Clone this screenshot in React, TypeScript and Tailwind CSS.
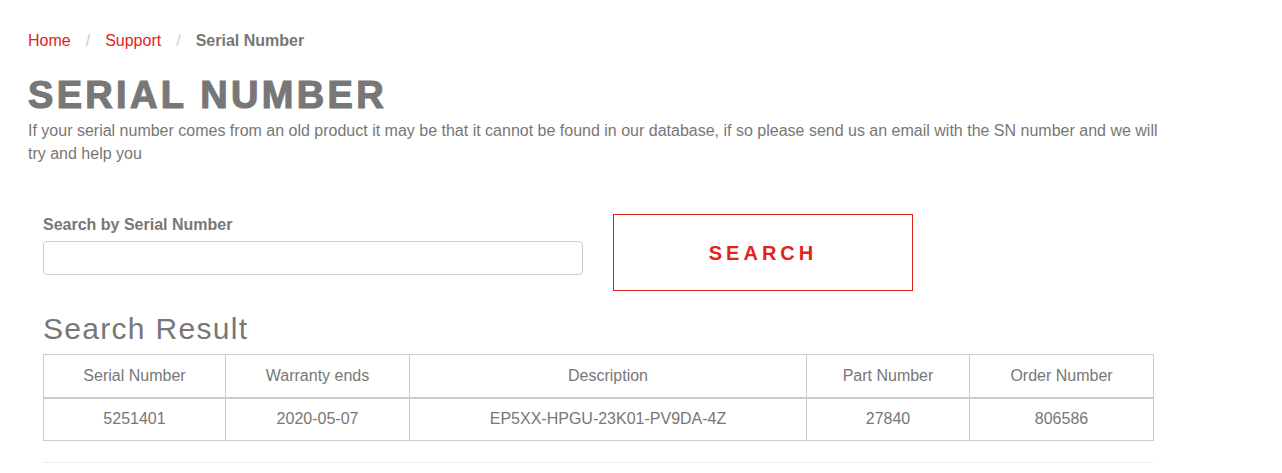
import React, { useState } from 'react';

const rows = [
  { serial: '5251401', warranty: '2020-05-07', description: 'EP5XX-HPGU-23K01-PV9DA-4Z', part: '27840', order: '806586' },
];

export default function App() {
  const [serial, setSerial] = useState('');

  return (
    <div className="min-h-screen bg-white font-['Liberation_Sans',Arial,sans-serif] text-[#777]">
      <div className="w-[1165px] pl-[28px] pt-[32px]">
        {/* Breadcrumb */}
        <nav className="flex items-center text-[16px] leading-[18px]">
          <a href="#" className="text-[#e2231a]">Home</a>
          <span className="px-[15px] text-[#ccc]">/</span>
          <a href="#" className="text-[#e2231a]">Support</a>
          <span className="px-[15px] text-[#ccc]">/</span>
          <span className="font-bold text-[#777]">Serial Number</span>
        </nav>

        <h1 className="mt-[23px] text-[38px] leading-[44px] font-bold tracking-[3.3px] text-[#777] [-webkit-text-stroke:1.2px_#777]">
          SERIAL NUMBER
        </h1>
        <p className="mt-[2px] text-[16px] leading-[23px]">
          If your serial number comes from an old product it may be that it cannot be found in our database, if so please send us an email with the SN number and we will try and help you
        </p>
      </div>

      <div className="w-[1111px] ml-[43px] mt-[50px]">
        {/* Search form */}
        <div className="flex items-start gap-[30px]">
          <div className="w-[540px]">
            <label htmlFor="sn" className="block text-[16px] leading-[20px] font-bold text-[#777]">
              Search by Serial Number
            </label>
            <input
              id="sn"
              type="text"
              value={serial}
              onChange={(e) => setSerial(e.target.value)}
              className="mt-[6px] block h-[34px] w-full rounded-[4px] border border-[#ccc] px-3 text-[16px] outline-none"
            />
          </div>
          <button
            type="button"
            className="-mt-px h-[77px] w-[300px] border border-[#e2231a] text-[20px] font-bold tracking-[4px] text-[#e2231a]"
          >
            SEARCH
          </button>
        </div>

        <h2 className="mt-[21px] text-[30px] leading-[34px] tracking-[1.3px] text-[#777]">Search Result</h2>

        <table className="mt-[8px] w-full border-collapse text-center text-[16px] text-[#777]">
          <thead>
            <tr className="h-[43px]">
              <th className="w-[182px] border border-[#ccc] border-b-2 font-normal">Serial Number</th>
              <th className="w-[184px] border border-[#ccc] border-b-2 font-normal">Warranty ends</th>
              <th className="w-[397px] border border-[#ccc] border-b-2 font-normal">Description</th>
              <th className="w-[163px] border border-[#ccc] border-b-2 font-normal">Part Number</th>
              <th className="border border-[#ccc] border-b-2 font-normal">Order Number</th>
            </tr>
          </thead>
          <tbody>
            {rows.map((r) => (
              <tr key={r.serial} className="h-[43px]">
                <td className="border border-[#ccc]">{r.serial}</td>
                <td className="border border-[#ccc]">{r.warranty}</td>
                <td className="border border-[#ccc]">{r.description}</td>
                <td className="border border-[#ccc]">{r.part}</td>
                <td className="border border-[#ccc]">{r.order}</td>
              </tr>
            ))}
          </tbody>
        </table>

        <div className="mt-[21px] border-t border-[#eee]" />
      </div>
    </div>
  );
}
